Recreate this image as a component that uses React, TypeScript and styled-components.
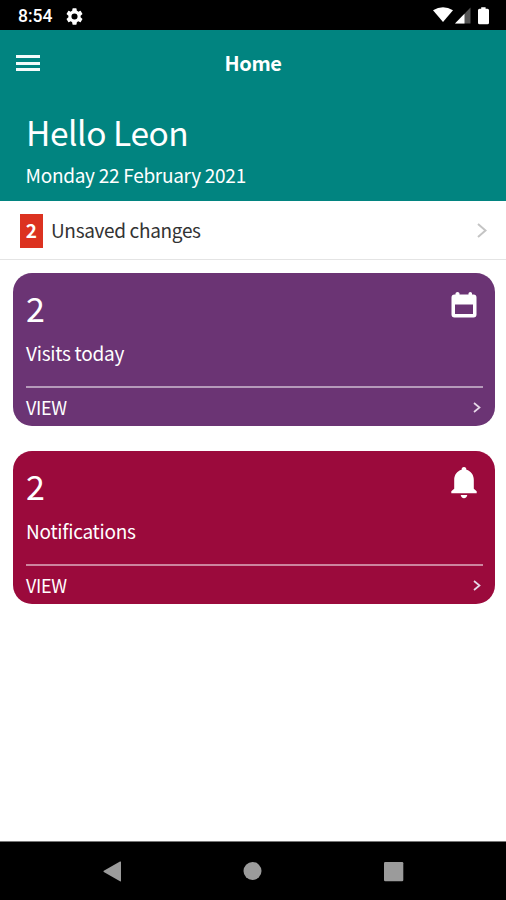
import React from "react";
import styled, { createGlobalStyle } from "styled-components";

const GlobalStyle = createGlobalStyle`
  * { box-sizing: border-box; }
  body { margin: 0; background: #fff; }
`;

const Screen = styled.div`
  display: flex;
  flex-direction: column;
  height: 900px;
  overflow: hidden;
  background: #fff;
  color: #fff;
  font-family: "Noto Sans CJK SC", "Noto Sans", sans-serif;
`;

const StatusBar = styled.div`
  display: flex;
  align-items: center;
  flex: none;
  height: 30px;
  padding: 2px 15px 0 18px;
  background: #000;
`;

const Clock = styled.span`
  width: 48px;
  font: 500 17.5px/20px Roboto, sans-serif;
`;

const StatusIcons = styled.div`
  display: flex;
  align-items: center;
  margin-left: auto;
`;

const Header = styled.header`
  flex: none;
  height: 171px;
  background: #018480;
`;

const AppBar = styled.div`
  display: grid;
  grid-template-columns: 24px 1fr 24px;
  align-items: center;
  height: 66px;
  padding: 0 16px;
`;

const MenuButton = styled.button`
  display: flex;
  flex-direction: column;
  gap: 3.5px;
  width: 24px;
  padding: 0;
  border: 0;
  background: none;
`;

const MenuLine = styled.span`
  height: 3px;
  background: #f4fbfb;
`;

const Title = styled.h1`
  margin: 0;
  font-size: 20px;
  line-height: 28px;
  font-weight: 700;
  letter-spacing: -0.4px;
  text-align: center;
`;

const Greeting = styled.p`
  margin: 16px 0 0 26px;
  font-size: 33.5px;
  line-height: 40px;
  letter-spacing: -0.45px;
`;

const DateLine = styled.p`
  margin: 9px 0 0 25.5px;
  font-size: 19px;
  line-height: 28px;
  letter-spacing: -0.28px;
`;

const ChangesRow = styled.div`
  display: flex;
  align-items: center;
  flex: none;
  height: 59px;
  padding: 1px 19px 0 19.5px;
  border-bottom: 1px solid #e4e4e4;
  color: #333;
`;

const Badge = styled.span`
  width: 23.5px;
  height: 34px;
  margin: 1px 8px 0 0;
  background: #dc3220;
  color: #fff;
  font-size: 19px;
  font-weight: 700;
  line-height: 31px;
  text-align: center;
`;

const ChangesLabel = styled.span`
  font-size: 19px;
  line-height: 28px;
  letter-spacing: -0.33px;
  margin-right: auto;
  padding-bottom: 1px;
`;

const Cards = styled.main`
  display: flex;
  flex-direction: column;
  flex: 1;
  gap: 25px;
  padding: 13px 11.5px 0 13px;
`;

const Card = styled.section<{ $color: string }>`
  height: 153px;
  padding: 15px 12px 0 13px;
  border-radius: 19px;
  background: ${(p) => p.$color};
`;

const CardTop = styled.div`
  display: flex;
  justify-content: space-between;
  height: 51px;
`;

const Count = styled.div`
  font-size: 34px;
  line-height: 40px;
`;

const CardIcon = styled.div<{ $top: number }>`
  width: 26px;
  height: 34px;
  margin: ${(p) => p.$top}px 5.5px 0 0;
`;

const CardLabel = styled.div`
  height: 47px;
  font-size: 19px;
  line-height: 28px;
  letter-spacing: -0.25px;
`;

const CardAction = styled.div`
  display: flex;
  align-items: center;
  justify-content: space-between;
  height: 36px;
  padding: 4px 2px 0 0;
  border-top: 2.5px solid rgba(255, 255, 255, 0.5);
  font-size: 18px;
  line-height: 24px;
  letter-spacing: -0.3px;
`;

const NavBar = styled.nav`
  display: flex;
  justify-content: space-between;
  flex: none;
  height: 59px;
  padding: 19px 102.5px 0 103px;
  border-top: 1px solid #777;
  background: #000;
`;

const Icon = styled.svg`
  display: block;
  flex: none;
`;

const Chevron = ({ width, height, color, stroke }: { width: number; height: number; color: string; stroke: number }) => (
  <Icon width={width} height={height} viewBox={`0 0 ${width} ${height}`} fill="none">
    <path d={`M1 1L${width - 1.5} ${height / 2}L1 ${height - 1}`} stroke={color} strokeWidth={stroke} />
  </Icon>
);

const CalendarIcon = () => (
  <Icon width="26" height="26" viewBox="0 0 26 26" fill="#fff" fillRule="evenodd">
    <path d="M3.5 2.5H4.5V1.5Q4.5 0 6.5 0T8.5 1.5V2.5H17.5V1.5Q17.5 0 19.3 0T21 1.5V2.5H22.5Q25.5 2.5 25.5 5.5V22.5Q25.5 25.5 22.5 25.5H3.5Q.5 25.5 .5 22.5V5.5Q.5 2.5 3.5 2.5ZM4 12.5V22H22V12.5Z" />
  </Icon>
);

const BellIcon = () => (
  <Icon width="26" height="32" viewBox="0 0 26 32" fill="#fff">
    <path d="M13 0C14.6 0 15.4 1.1 15.4 2.7C20 4 22.8 8 22.8 12.7V21.8L25.7 24.2V26.2H.3V24.2L3.2 21.8V12.7C3.2 8 6 4 10.6 2.7C10.6 1.1 11.4 0 13 0ZM9.7 28H16.3C16 30 14.8 31.2 13 31.2S10 30 9.7 28Z" />
  </Icon>
);

const cards = [
  { count: 2, label: "Visits today", color: "#6b3474", icon: <CalendarIcon />, iconTop: 3.5 },
  { count: 2, label: "Notifications", color: "#9b0a3c", icon: <BellIcon />, iconTop: 1 },
];

export default function App() {
  return (
    <Screen>
      <GlobalStyle />
      <StatusBar>
        <Clock>8:54</Clock>
        <Icon width="17" height="17" viewBox="2 2 20 20" fill="#fff">
          <path d="M19.14 12.94c.04-.3.06-.61.06-.94s-.02-.64-.07-.94l2.03-1.58a.49.49 0 0 0 .12-.61l-1.92-3.32a.49.49 0 0 0-.59-.22l-2.39.96a7 7 0 0 0-1.62-.94l-.36-2.54A.48.48 0 0 0 13.92 2.4h-3.84a.48.48 0 0 0-.47.41l-.36 2.54a7 7 0 0 0-1.62.94l-2.39-.96a.48.48 0 0 0-.59.22L2.74 8.87a.48.48 0 0 0 .12.61l2.03 1.58c-.05.3-.09.63-.09.94s.02.64.07.94l-2.03 1.58a.49.49 0 0 0-.12.61l1.92 3.32c.12.22.37.29.59.22l2.39-.96c.5.38 1.03.7 1.62.94l.36 2.54c.05.24.24.41.48.41h3.84c.24 0 .44-.17.47-.41l.36-2.54a7 7 0 0 0 1.62-.94l2.39.96c.22.08.47 0 .59-.22l1.92-3.32a.48.48 0 0 0-.12-.61ZM12 15.6A3.6 3.6 0 1 1 12 8.4a3.6 3.6 0 0 1 0 7.2Z" />
        </Icon>
        <StatusIcons>
          <Icon width="58" height="18" viewBox="0 0 58 18">
            <path d="M0 3.3Q10 -2.9 20 3.3L10 15Z" fill="#fff" />
            <path d="M37.5 .5V16.5H22Z" fill="#555" />
            <path d="M31.5 6.7V16.5H22Z" fill="#fff" />
            <path d="M48.2 .2H52.6V1.7H54.5Q56 1.7 56 3.2V15.7Q56 17.2 54.5 17.2H46.5Q45 17.2 45 15.7V3.2Q45 1.7 46.5 1.7H48.2Z" fill="#fff" />
          </Icon>
        </StatusIcons>
      </StatusBar>
      <Header>
        <AppBar>
          <MenuButton aria-label="Menu">
            <MenuLine />
            <MenuLine />
            <MenuLine />
          </MenuButton>
          <Title>Home</Title>
        </AppBar>
        <Greeting>Hello Leon</Greeting>
        <DateLine>Monday 22 February 2021</DateLine>
      </Header>
      <ChangesRow>
        <Badge>2</Badge>
        <ChangesLabel>Unsaved changes</ChangesLabel>
        <Chevron width={10} height={15} color="#c4c4c4" stroke={2} />
      </ChangesRow>
      <Cards>
        {cards.map((c) => (
          <Card key={c.label} $color={c.color}>
            <CardTop>
              <Count>{c.count}</Count>
              <CardIcon $top={c.iconTop}>{c.icon}</CardIcon>
            </CardTop>
            <CardLabel>{c.label}</CardLabel>
            <CardAction>
              <span>VIEW</span>
              <Chevron width={8} height={11} color="#e6d8e8" stroke={1.7} />
            </CardAction>
          </Card>
        ))}
      </Cards>
      <NavBar>
        <Icon width="19" height="21" viewBox="0 0 19 21" fill="#9b9b9b">
          <path d="M18 1Q18 0 17 .6L.8 9.8Q0 10.3 .8 10.9L17 20.2Q18 20.8 18 19.7Z" />
        </Icon>
        <Icon width="19" height="19" viewBox="0 0 19 19" fill="#9b9b9b">
          <circle cx="9.5" cy="10" r="9" />
        </Icon>
        <Icon width="20" height="21" viewBox="0 0 20 21" fill="#9b9b9b">
          <rect x="0" y="1" width="19.3" height="19.3" rx="1.2" />
        </Icon>
      </NavBar>
    </Screen>
  );
}
